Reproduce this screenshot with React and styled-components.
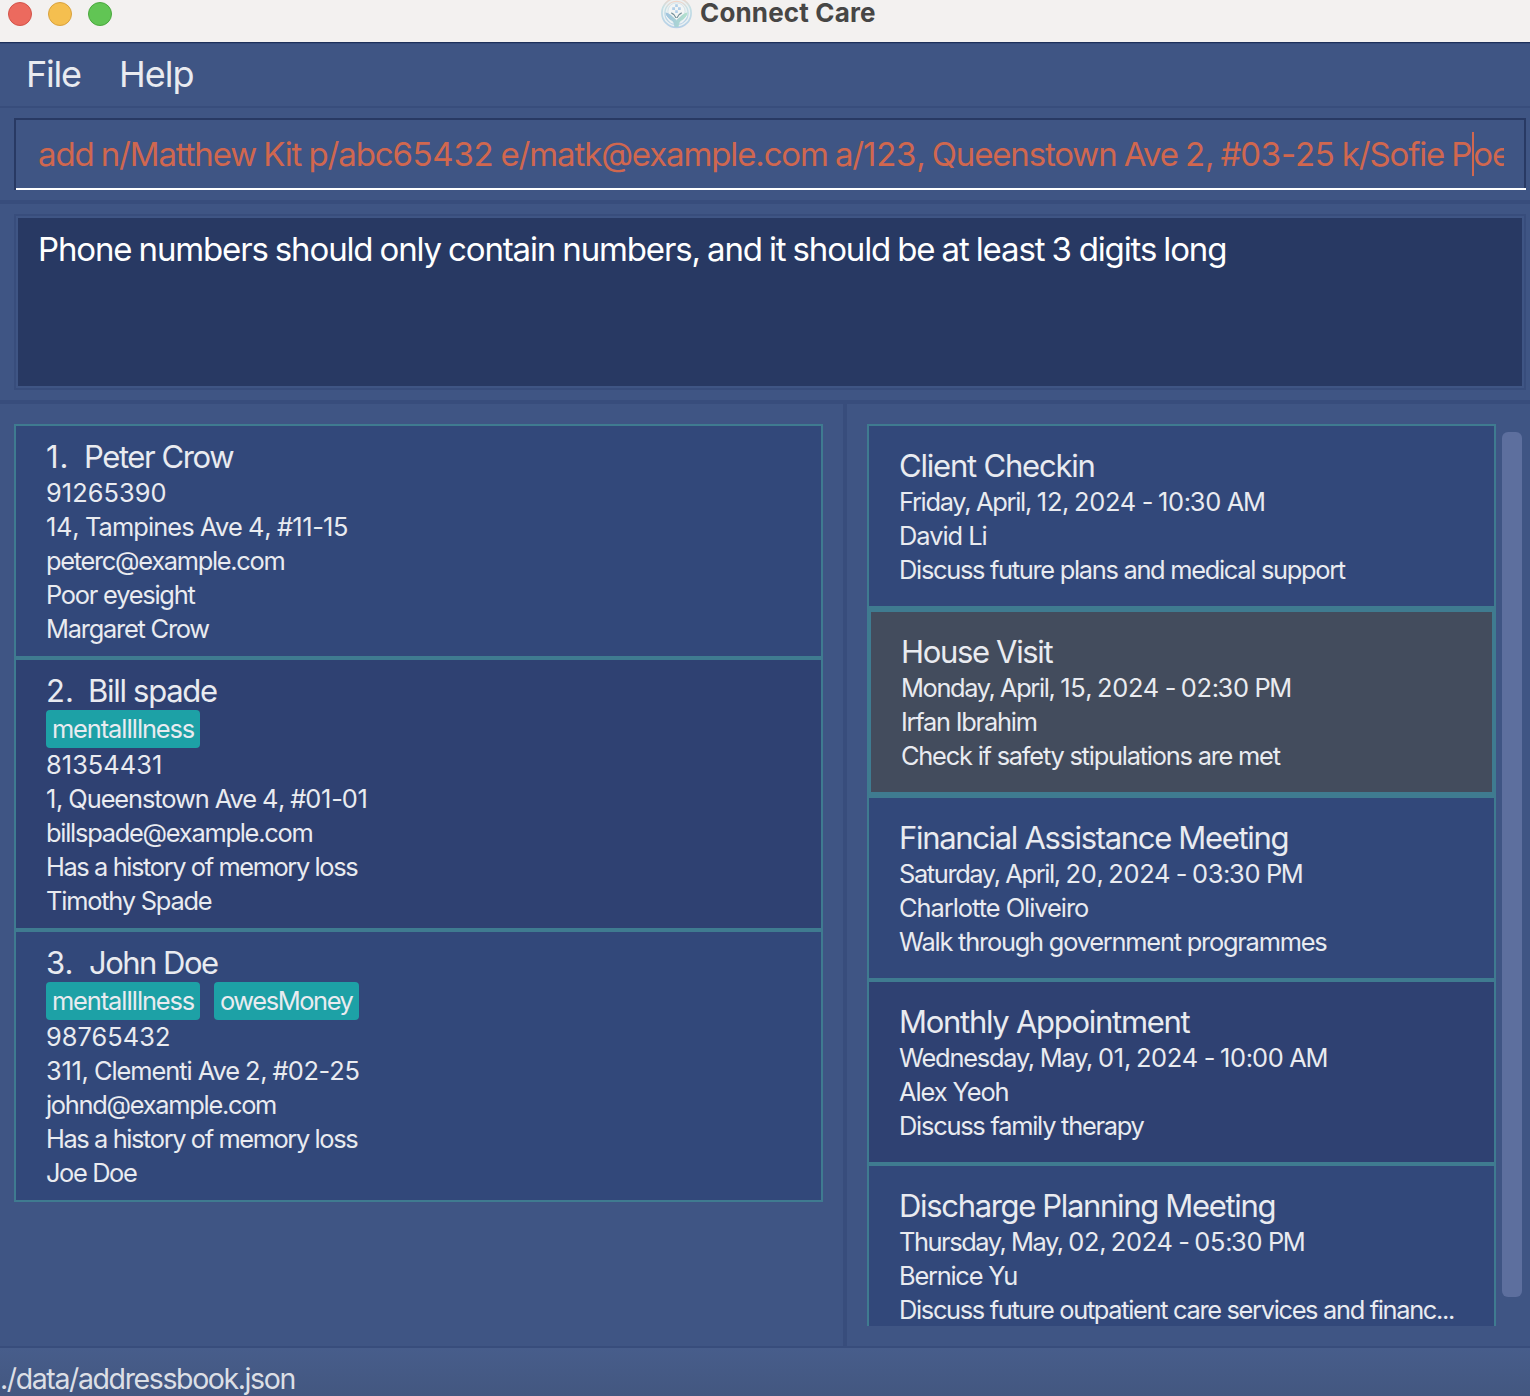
import React from "react";
import styled, { createGlobalStyle } from "styled-components";

const color = {
  base: "#3f5584",
  line: "#384d7c",
  dark: "#283963",
  cellOdd: "#32487a",
  cellEven: "#2f4172",
  cellSelected: "#434c5d",
  teal: "#3f7b90",
  tag: "#1da1a6",
  text: "#e9ebf0",
  error: "#d0674f",
};

const GlobalStyle = createGlobalStyle`
  * { box-sizing: border-box; }
  body {
    margin: 0;
    background: ${color.base};
    font-family: Inter, "Liberation Sans", sans-serif;
    overflow: hidden;
  }
`;

const Window = styled.div`
  display: flex;
  flex-direction: column;
  width: 1530px;
  height: 1396px;
  background: ${color.base};
  color: ${color.text};
  overflow: hidden;
`;

const TitleBar = styled.header`
  display: flex;
  flex: none;
  height: 42px;
  padding-left: 8px;
  background: #f3f1f0;
`;

const Lights = styled.div`
  display: flex;
  gap: 16px;
  padding-top: 2px;
`;

const Light = styled.span`
  width: 24px;
  height: 24px;
  border-radius: 50%;
  background: ${(p) => p.$fill};
  border: 1px solid ${(p) => p.$edge};
`;

const Title = styled.div`
  display: flex;
  align-items: center;
  gap: 8px;
  height: 26px;
  margin-left: 549px;
  color: #474645;
  font-size: 26px;
  font-weight: 700;
  line-height: 26px;
  letter-spacing: 0.155px;
  white-space: nowrap;
`;

const MenuBar = styled.nav`
  display: flex;
  flex: none;
  height: 66px;
  padding-left: 26px;
  border-top: 1px solid #1d305a;
  border-bottom: 2px solid ${color.line};
  box-shadow: inset 0 1px 0 #344a79;
  font-size: 36px;
  line-height: 63px;
`;

const MenuItem = styled.span`
  width: ${(p) => p.$width}px;
  letter-spacing: ${(p) => p.$tracking}px;
`;

const CommandArea = styled.section`
  flex: none;
  height: 96px;
  padding: 10px 4px 10px 14px;
  border-bottom: 4px solid ${color.line};
`;

const CommandBox = styled.div`
  display: flex;
  flex-direction: column;
  height: 72px;
  border-top: 2px solid ${color.dark};
  border-left: 2px solid ${color.dark};
`;

const CommandField = styled.div`
  height: 68px;
  padding: 0 20px 0 22px;
  border-right: 2px solid ${color.dark};
`;

const CommandText = styled.div`
  display: flex;
  align-items: center;
  height: 68px;
  overflow: hidden;
  color: ${color.error};
  font-size: 33px;
  white-space: pre;
  word-spacing: -1px;
`;

const Caret = styled.i`
  flex: none;
  width: 2px;
  height: 44px;
  margin: 0 -1px 0 1px;
  background: ${color.error};
`;

const Underline = styled.div`
  height: 2px;
  background: #ffffff;
`;

const ResultArea = styled.section`
  flex: none;
  height: 200px;
  padding: 10px 4px 10px 14px;
  border-bottom: 4px solid ${color.line};
`;

const ResultFrame = styled.div`
  height: 176px;
  padding: 2px;
  border: 2px solid ${color.line};
`;

const ResultDisplay = styled.div`
  height: 168px;
  padding: 11px 20px;
  background: ${color.dark};
  color: #ffffff;
  font-size: 33px;
  line-height: 40px;
  white-space: nowrap;
  word-spacing: -1px;
`;

const Main = styled.main`
  display: flex;
  flex: none;
  height: 942px;
`;

const PersonPanel = styled.section`
  width: 847px;
  padding: 20px 20px 0 14px;
  border-right: 4px solid ${color.line};
`;

const EventPanel = styled.section`
  display: flex;
  gap: 6px;
  width: 683px;
  padding: 20px 8px 20px 20px;
`;

const EventList = styled.div`
  width: 629px;
  height: 902px;
  overflow: hidden;
`;

const ScrollThumb = styled.div`
  width: 20px;
  height: 865px;
  margin-top: 8px;
  border-radius: 6px;
  background: #5d6f9e;
`;

const Cell = styled.article`
  border: ${(p) => (p.$selected ? 4 : 2)}px solid ${color.teal};
  background: ${(p) =>
    p.$selected ? color.cellSelected : p.$even ? color.cellEven : color.cellOdd};
  white-space: pre;
`;

const PersonCell = styled(Cell)`
  padding: 12px 30px 10px;
`;

const EventCell = styled(Cell)`
  padding: 21px 0 19px 30px;
`;

const Heading = styled.h2`
  display: flex;
  height: 38px;
  margin: 0;
  font-size: 31px;
  font-weight: 400;
  line-height: 38px;
`;

const Index = styled.span`
  width: ${(p) => p.$width}px;
`;

const Line = styled.div`
  height: 34px;
  font-size: 25.4px;
  line-height: 34px;
`;

const Tags = styled.div`
  display: flex;
  gap: 14px;
  height: 38px;
`;

const Tag = styled.span`
  width: ${(p) => p.$width}px;
  padding-left: 6px;
  border-radius: 4px;
  background: ${color.tag};
  font-size: 25.4px;
  line-height: 38px;
`;

const StatusBar = styled.footer`
  flex: none;
  height: 50px;
  border-top: 2px solid ${color.line};
  background: linear-gradient(#475d8b, #435780);
  color: #dcdfe5;
  font-size: 28.5px;
  line-height: 62px;
  letter-spacing: -1.39px;
  overflow: hidden;
`;

const Letters = styled.span`
  letter-spacing: ${(p) => p.$tracking}px;
`;

/* Letters are set tight, figures stay close to their natural width. */
function Tracked({ text, by }) {
  const figures = by === 0 ? 0.05 : -0.28;
  return (
    <span>
      {text.split(/(\d+)/).map((run, i) => (
        <Letters key={i} $tracking={i % 2 ? figures : by}>
          {run}
        </Letters>
      ))}
    </span>
  );
}

function AppLogo() {
  return (
    <svg width="31" height="31" viewBox="0 0.6 31 31" fill="none" opacity="0.82">
      <defs>
        <linearGradient id="ring" x1="0" y1="0" x2="0" y2="1">
          <stop offset="0" stopColor="#f3cfc0" />
          <stop offset="0.3" stopColor="#bcdde2" />
          <stop offset="1" stopColor="#a9c9e6" />
        </linearGradient>
        <linearGradient id="hand" x1="0" y1="0" x2="1" y2="0">
          <stop offset="0" stopColor="#8fb9dc" />
          <stop offset="1" stopColor="#a5dfc4" />
        </linearGradient>
      </defs>
      <circle cx="15.5" cy="15.5" r="14.6" fill="#e9f1f3" stroke="url(#ring)" strokeWidth="1.7" />
      <circle cx="15.5" cy="15.5" r="11.6" stroke="url(#ring)" strokeWidth="1.3" />
      <circle cx="15.5" cy="14" r="8.6" fill="#f4f6f6" stroke="#cfe2e8" strokeWidth="1" />
      <path d="M4.500 15c.5 4.500 3.500 6.500 6 8 2 1.200 2.800 3.500 2.800 6.500h4.400c0-3 .8-5.300 2.800-6.500 2.500-1.500 5.500-3.500 6-8-3 .6-5 2-7 4-1.500 1.500-3.400 2.500-4 4-.6-1.500-2.500-2.500-4-4-2-2-4-3.400-7-4Z" fill="url(#hand)" />
      <path d="M10.300 15.500c2 .8 3.800 2.500 4.700 5m5.700-5c-2 .8-3.800 2.500-4.700 5" stroke="#567a84" strokeWidth="1.200" />
      <path d="M15.500 6.800v2.800M15.500 12.800v2.800M11.200 11.200h2.800M17 11.200h2.800" stroke="#a3c8e8" strokeWidth="2.600" />
      <path d="M6.500 21l4.500 5M5 18.500l3 4M24.500 21l-4.500 5M26 18.500l-3 4" stroke="#f1f6f8" strokeWidth="1" />
    </svg>
  );
}

const people = [
  {
    index: ["1.", 38, 1], name: ["Peter Crow", -1.41], tags: [],
    lines: [["91265390", 0], ["14, Tampines Ave 4, #11-15", -0.876], ["peterc@example.com", -1.295], ["Poor eyesight", -1.229], ["Margaret Crow", -1.22]],
  },
  {
    index: ["2.", 42, 0], name: ["Bill spade", -1.285], tags: [["mentalIllness", -1.12, 154]],
    lines: [["81354431", 0], ["1, Queenstown Ave 4, #01-01", -1.076], ["billspade@example.com", -1.25], ["Has a history of memory loss", -1.39], ["Timothy Spade", -1.2]],
  },
  {
    index: ["3.", 43, 0], name: ["John Doe", -1.515], tags: [["mentalIllness", -1.12, 154], ["owesMoney", -1.4, 145]],
    lines: [["98765432", 0], ["311, Clementi Ave 2, #02-25", -1.04], ["johnd@example.com", -1.28], ["Has a history of memory loss", -1.39], ["Joe Doe", -1.38]],
  },
];

const events = [
  {
    name: ["Client Checkin", -1.207],
    lines: [["Friday, April, 12, 2024 - 10:30 AM", -1.29], ["David Li", -1.025], ["Discuss future plans and medical support", -1.295]],
  },
  {
    name: ["House Visit", -1.338], selected: true,
    lines: [["Monday, April, 15, 2024 - 02:30 PM", -1.39], ["Irfan Ibrahim", -1.24], ["Check if safety stipulations are met", -1.22]],
  },
  {
    name: ["Financial Assistance Meeting", -1.325],
    lines: [["Saturday, April, 20, 2024 - 03:30 PM", -1.37], ["Charlotte Oliveiro", -1.02], ["Walk through government programmes", -1.22]],
  },
  {
    name: ["Monthly Appointment", -1.28],
    lines: [["Wednesday, May, 01, 2024 - 10:00 AM", -1.23], ["Alex Yeoh", -1.08], ["Discuss family therapy", -1.24]],
  },
  {
    name: ["Discharge Planning Meeting", -1.33],
    lines: [["Thursday, May, 02, 2024 - 05:30 PM", -1.44], ["Bernice Yu", -1.23], ["Discuss future outpatient care services and financ...", -1.324]],
  },
];

const command =
  "add n/Matthew Kit p/abc65432 e/matk@example.com a/123, Queenstown Ave 2, #03-25 k/Sofie P";

export default function App() {
  return (
    <Window>
      <GlobalStyle />
      <TitleBar>
        <Lights>
          <Light $fill="#ec6a5e" $edge="#d35349" />
          <Light $fill="#f5bf4f" $edge="#d9a23e" />
          <Light $fill="#61c554" $edge="#4aa83e" />
        </Lights>
        <Title>
          <AppLogo />
          <span>Connect Care</span>
        </Title>
      </TitleBar>

      <MenuBar>
        <MenuItem $width={93} $tracking={-1.23}>File</MenuItem>
        <MenuItem $width={90} $tracking={-1}>Help</MenuItem>
      </MenuBar>

      <CommandArea>
        <CommandBox>
          <CommandField>
            <CommandText>
              <Tracked text={command} by={-1.14} />
              <Caret />
              <Tracked text="oe" by={-1.14} />
            </CommandText>
          </CommandField>
          <Underline />
        </CommandBox>
      </CommandArea>

      <ResultArea>
        <ResultFrame>
          <ResultDisplay>
            <Tracked
              text="Phone numbers should only contain numbers, and it should be at least 3 digits long"
              by={-1.145}
            />
          </ResultDisplay>
        </ResultFrame>
      </ResultArea>

      <Main>
        <PersonPanel>
          {people.map((person, i) => (
            <PersonCell key={i} $even={i % 2 === 1}>
              <Heading>
                <Index $width={person.index[1]}>
                  <Letters $tracking={person.index[2]}>{person.index[0]}</Letters>
                </Index>
                <Tracked text={person.name[0]} by={person.name[1]} />
              </Heading>
              {person.tags.length > 0 && (
                <Tags>
                  {person.tags.map(([text, by, width]) => (
                    <Tag key={text} $width={width}>
                      <Tracked text={text} by={by} />
                    </Tag>
                  ))}
                </Tags>
              )}
              {person.lines.map(([text, by]) => (
                <Line key={text}>
                  <Tracked text={text} by={by} />
                </Line>
              ))}
            </PersonCell>
          ))}
        </PersonPanel>

        <EventPanel>
          <EventList>
            {events.map((event, i) => (
              <EventCell key={i} $even={i % 2 === 1} $selected={event.selected}>
                <Heading>
                  <Tracked text={event.name[0]} by={event.name[1]} />
                </Heading>
                {event.lines.map(([text, by]) => (
                  <Line key={text}>
                    <Tracked text={text} by={by} />
                  </Line>
                ))}
              </EventCell>
            ))}
          </EventList>
          <ScrollThumb />
        </EventPanel>
      </Main>

      <StatusBar>./data/addressbook.json</StatusBar>
    </Window>
  );
}
